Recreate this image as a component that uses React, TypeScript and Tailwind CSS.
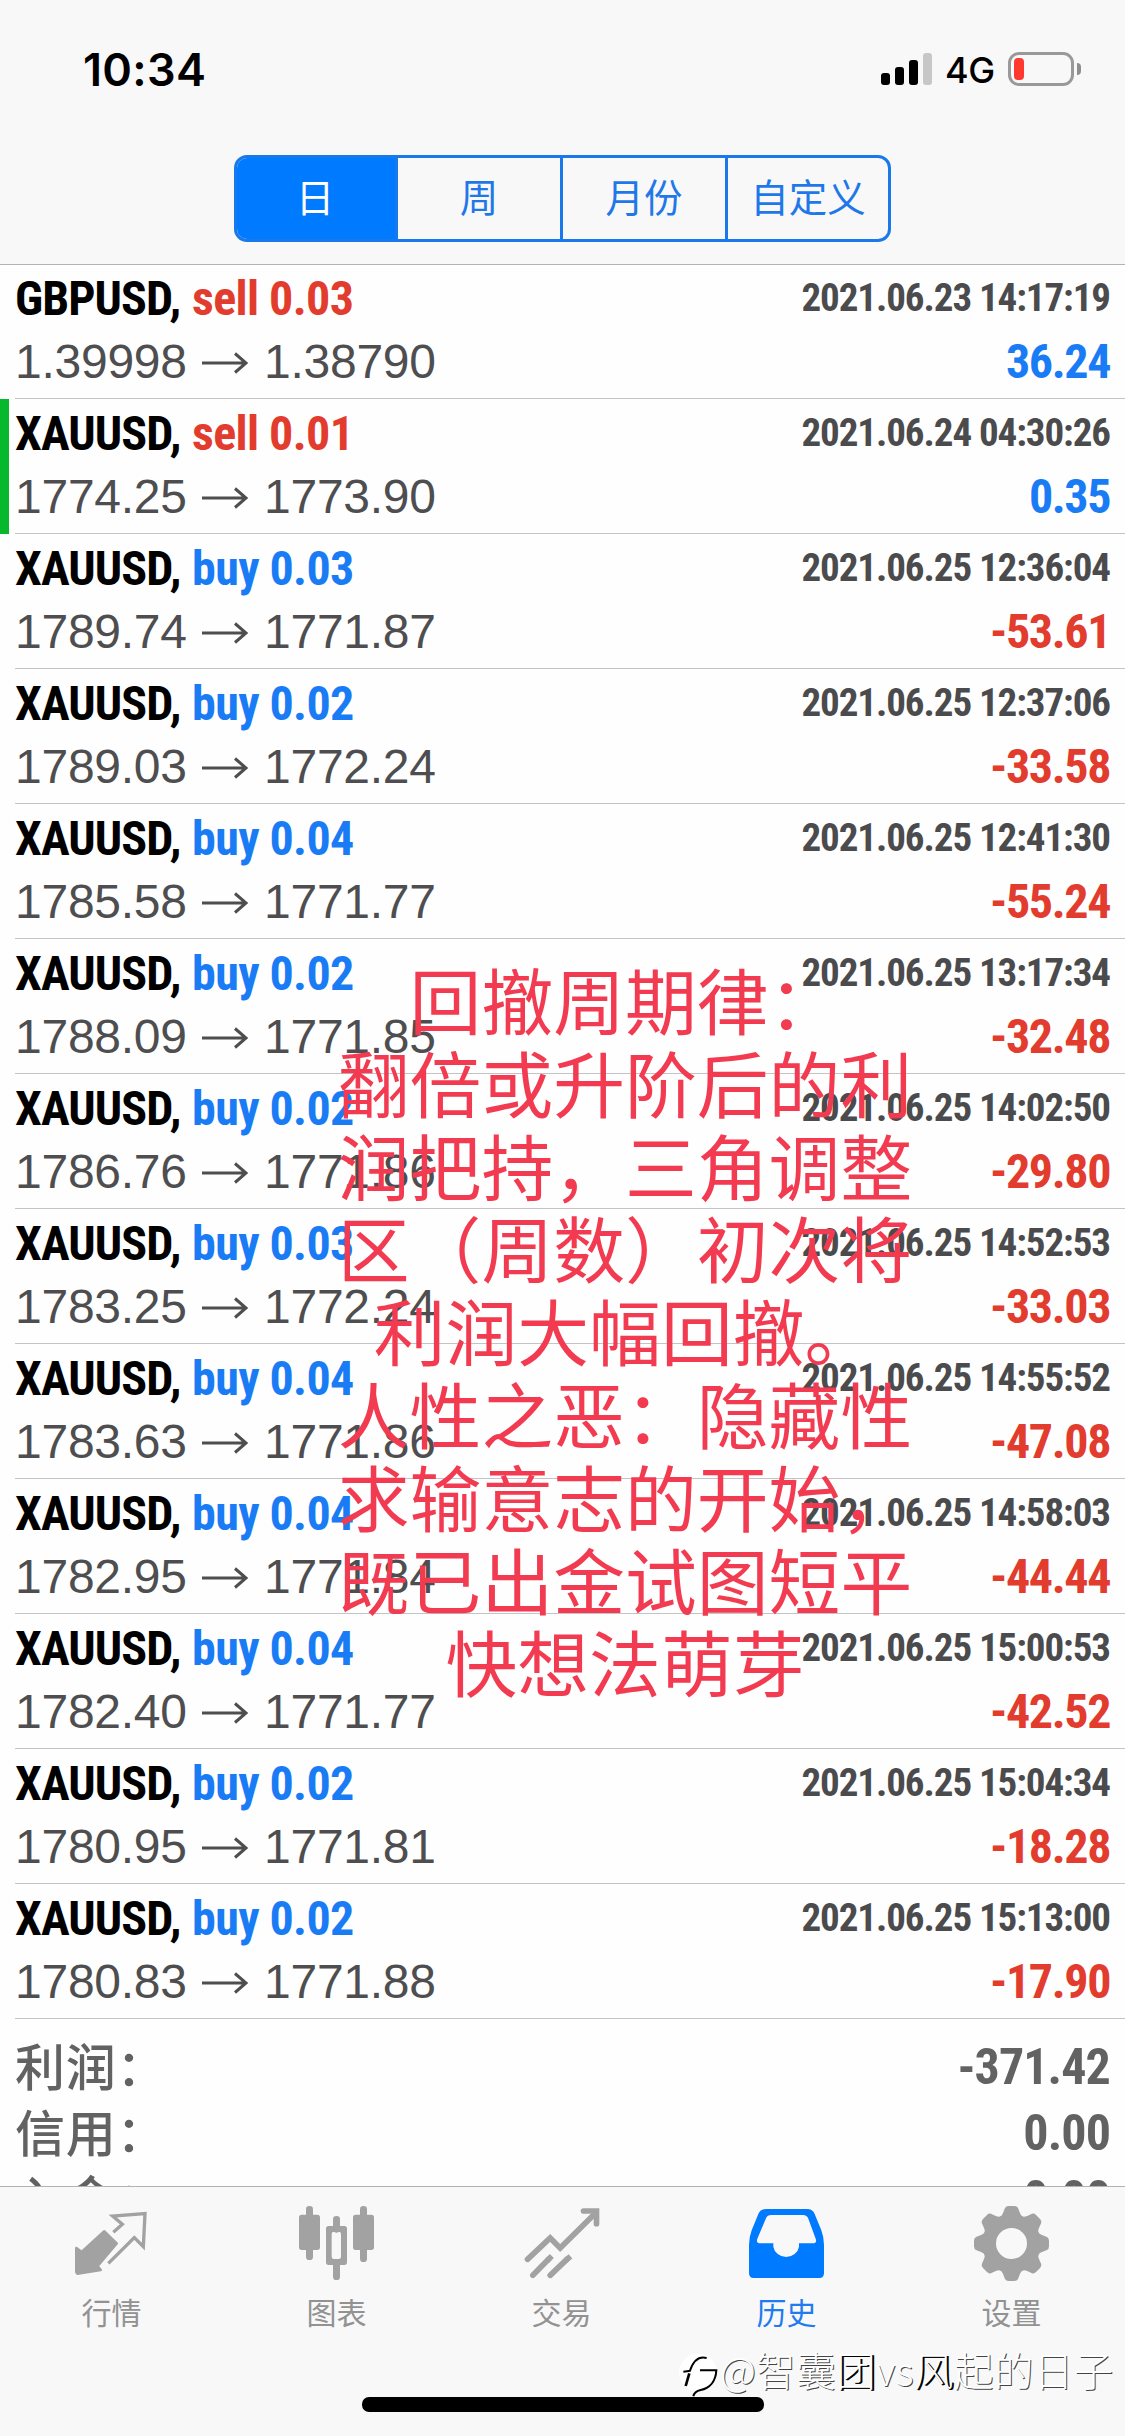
import type { ReactNode } from "react";

type Deal = {
  symbol: string;
  side: "buy" | "sell";
  volume: string;
  open: string;
  close: string;
  time: string;
  profit: string;
  marked?: boolean;
};

const deals: Deal[] = [
  { symbol: "GBPUSD", side: "sell", volume: "0.03", open: "1.39998", close: "1.38790", time: "2021.06.23 14:17:19", profit: "36.24" },
  { symbol: "XAUUSD", side: "sell", volume: "0.01", open: "1774.25", close: "1773.90", time: "2021.06.24 04:30:26", profit: "0.35", marked: true },
  { symbol: "XAUUSD", side: "buy", volume: "0.03", open: "1789.74", close: "1771.87", time: "2021.06.25 12:36:04", profit: "-53.61" },
  { symbol: "XAUUSD", side: "buy", volume: "0.02", open: "1789.03", close: "1772.24", time: "2021.06.25 12:37:06", profit: "-33.58" },
  { symbol: "XAUUSD", side: "buy", volume: "0.04", open: "1785.58", close: "1771.77", time: "2021.06.25 12:41:30", profit: "-55.24" },
  { symbol: "XAUUSD", side: "buy", volume: "0.02", open: "1788.09", close: "1771.85", time: "2021.06.25 13:17:34", profit: "-32.48" },
  { symbol: "XAUUSD", side: "buy", volume: "0.02", open: "1786.76", close: "1771.86", time: "2021.06.25 14:02:50", profit: "-29.80" },
  { symbol: "XAUUSD", side: "buy", volume: "0.03", open: "1783.25", close: "1772.24", time: "2021.06.25 14:52:53", profit: "-33.03" },
  { symbol: "XAUUSD", side: "buy", volume: "0.04", open: "1783.63", close: "1771.86", time: "2021.06.25 14:55:52", profit: "-47.08" },
  { symbol: "XAUUSD", side: "buy", volume: "0.04", open: "1782.95", close: "1771.84", time: "2021.06.25 14:58:03", profit: "-44.44" },
  { symbol: "XAUUSD", side: "buy", volume: "0.04", open: "1782.40", close: "1771.77", time: "2021.06.25 15:00:53", profit: "-42.52" },
  { symbol: "XAUUSD", side: "buy", volume: "0.02", open: "1780.95", close: "1771.81", time: "2021.06.25 15:04:34", profit: "-18.28" },
  { symbol: "XAUUSD", side: "buy", volume: "0.02", open: "1780.83", close: "1771.88", time: "2021.06.25 15:13:00", profit: "-17.90" },
];

const noteLines = [
  "回撤周期律：",
  "翻倍或升阶后的利",
  "润把持，三角调整",
  "区（周数）初次将",
  "利润大幅回撤。",
  "人性之恶：隐藏性",
  "求输意志的开始，",
  "既已出金试图短平",
  "快想法萌芽",
];

const summary = [
  ["利润：", "-371.42"],
  ["信用：", "0.00"],
  ["入金：", "0.00"],
];

function StatusBar() {
  return (
    <div className="flex h-[140px] items-start justify-between pl-[83px] pr-[44px]">
      <div className="mt-[42px] font-['Inter'] text-[45px] font-semibold leading-[56px] tracking-[0.3px] text-black">10:34</div>
      <div className="flex items-start">
        <div className="mt-[53px] flex h-[32px] items-end gap-[5px]">
          <i className="h-[12px] w-[9px] rounded-[3px] bg-black" />
          <i className="h-[18px] w-[9px] rounded-[3px] bg-black" />
          <i className="h-[25px] w-[9px] rounded-[3px] bg-black" />
          <i className="h-[32px] w-[9px] rounded-[3px] bg-[#c7c7c7]" />
        </div>
        <div className="ml-[13px] mt-[48px] w-[50px] font-['Inter'] text-[36px] font-medium leading-[44px] tracking-[-0.5px] text-black">4G</div>
        <div className="ml-[13px] mt-[52px] flex items-center gap-[3px]">
          <div className="h-[34px] w-[66px] rounded-[11px] border-[3px] border-[#999] p-[3px]">
            <div className="h-[22px] w-[10px] rounded-[4px] bg-[#ff3830]" />
          </div>
          <div className="h-[12px] w-[4px] rounded-r-[4px] bg-[#8e8e8e]" />
        </div>
      </div>
    </div>
  );
}

function Segments() {
  const items = ["日", "周", "月份", "自定义"];
  return (
    <div className="mt-[15px] grid h-[87px] w-[657px] grid-cols-[161px_165px_165px_1fr] divide-x-[3px] divide-[#1a79ea] overflow-hidden rounded-[13px] border-[3px] border-[#1a79ea] text-[38.5px] text-[#1f78ea]">
      {items.map((t, i) => (
        <div key={t} className={i === 0 ? "flex items-center justify-center bg-[#007aff] pb-[6px] pr-[2px] text-white" : "flex items-center justify-center pb-[6px]"}>
          {t}
        </div>
      ))}
    </div>
  );
}

function DealRow({ deal }: { deal: Deal }) {
  const tone = deal.side === "buy" ? "text-[#1a7cf5]" : "text-[#e23c2e]";
  const profitTone = deal.profit.startsWith("-") ? "text-[#e23c2e]" : "text-[#1a7cf5]";
  return (
    <div className="flex h-[135px]">
      <div className={deal.marked ? "w-[9px] bg-[#06b92c]" : "w-[9px]"} />
      <div className="ml-[6px] flex-1 border-b border-[#c4c4c6] pr-[15px] pt-[3px]">
        <div className="flex h-[63px] justify-between font-['Roboto'] font-bold [font-stretch:75%]">
          <div className="flex whitespace-pre text-[48px] leading-[63px]">
            <span className="w-[177px] tracking-[-0.9px] text-black">{deal.symbol},</span>
            <span className={`${tone} tracking-[-0.6px]`}>
              {deal.side} {deal.volume}
            </span>
          </div>
          <div className="text-[39px] leading-[63px] tracking-[-1.07px] text-[#4b4b4d]">{deal.time}</div>
        </div>
        <div className="flex h-[63px] justify-between text-[48px] leading-[63px]">
          <div className="flex items-center font-['Liberation_Sans'] tracking-[-0.25px] text-[#4e4e50]">
            <span className="w-[187px]">{deal.open}</span>
            <svg width="46" height="22" viewBox="0 0 46 22" fill="none" stroke="currentColor" strokeWidth="3" className="mt-[3px]">
              <path d="M0 11H44M33 1.5L44 11L33 20.5" />
            </svg>
            <span className="ml-[16px]">{deal.close}</span>
          </div>
          <div className={`${profitTone} font-['Roboto'] font-bold tracking-[-1.4px] [font-stretch:75%]`}>{deal.profit}</div>
        </div>
      </div>
    </div>
  );
}

function QuotesIcon() {
  return (
    <svg width="75" height="75" viewBox="225 108 225 225" className="overflow-visible" fill="none">
      <path fill="currentColor" stroke="currentColor" strokeWidth="8" strokeLinejoin="round" d="M313 184L350 220L293 288L302 300L232 311L229 306V234L245 246Z" />
      <path stroke="currentColor" strokeWidth="10" d="M340 187L367 163L338 138L435 131L430 230L403 203L325 280" />
    </svg>
  );
}

function ChartsIcon() {
  return (
    <svg width="75" height="75" viewBox="900 108 225 225" className="overflow-visible" fill="currentColor">
      <rect x="918" y="108" width="21" height="162" rx="10" />
      <rect x="897" y="134" width="63" height="106" rx="8" />
      <rect x="999" y="138" width="21" height="50" rx="10" />
      <rect x="999" y="270" width="21" height="60" rx="10" />
      <path fillRule="evenodd" d="M986 168H1033a8 8 0 0 1 8 8V277a8 8 0 0 1-8 8H986a8 8 0 0 1-8-8V176a8 8 0 0 1 8-8ZM1002 185a7 7 0 0 0-7 7V260a7 7 0 0 0 7 7H1016a7 7 0 0 0 7-7V192a7 7 0 0 0-7-7Z" />
      <rect x="1080" y="108" width="21" height="168" rx="10" />
      <rect x="1059" y="134" width="63" height="106" rx="8" />
    </svg>
  );
}

function TradeIcon() {
  return (
    <svg width="75" height="75" viewBox="43.5 48 225 225" className="overflow-visible" fill="none" stroke="currentColor" strokeWidth="17" strokeLinecap="round">
      <path d="M51 208L119 144L149 174L256 68" strokeLinejoin="miter" />
      <path d="M219 63H258V101" />
      <path d="M67 256L114 208M119 256L169 208" />
      <path d="M110 212L124 198M165 212L180 199" strokeLinecap="butt" />
    </svg>
  );
}

function HistoryIcon() {
  return (
    <svg width="75" height="75" viewBox="720 48 225 225" className="overflow-visible" fill="currentColor">
      <path
        fillRule="evenodd"
        d="M769 57H891Q908 57 914 72L934 121Q942 142 942 165V249Q942 264 928 264H731Q717 264 717 249V165Q717 142 725 121L745 72Q751 57 769 57ZM784 75Q772 75 768 85L742 146Q737 160 752 160H790V170A39 37 0 0 0 867 170V160H907Q922 160 917 146L895 86Q891 75 879 75Z"
      />
    </svg>
  );
}

function SettingsIcon() {
  const angles = [0, 45, 90, 135, 180, 225, 270, 315];
  return (
    <svg width="75" height="75" viewBox="45 48 225 225" className="overflow-visible" fill="currentColor">
      <circle cx="154.5" cy="160.5" r="67" fill="none" stroke="currentColor" strokeWidth="41" />
      {angles.map((a) => (
        <path key={a} transform={`rotate(${a} 154.5 160.5)`} d="M117 82Q126 79 130 67L135 54Q138 48 146 48H163Q171 48 174 54L179 67Q183 79 192 82L180 100H129Z" />
      ))}
    </svg>
  );
}

function Tab({ label, active, children }: { label: string; active?: boolean; children: ReactNode }) {
  return (
    <div className={active ? "flex flex-col items-center text-[#007aff]" : "flex flex-col items-center text-[#a2a2a2]"}>
      {children}
      <span className={active ? "mt-[12px] pr-[2px] text-[30px] leading-[36px] text-[#1f7cf0]" : "mt-[12px] pr-[2px] text-[30px] leading-[36px] text-[#929292]"}>{label}</span>
    </div>
  );
}

export default function App() {
  return (
    <div className="relative flex h-[2436px] w-[1125px] flex-col overflow-hidden bg-[#fefefe] font-['Inter','Noto_Sans_CJK_SC',sans-serif]">
      <header className="z-10 flex h-[265px] shrink-0 flex-col items-center border-b border-[#b2b2b2] bg-[#f8f8f8] font-['Noto_Sans_CJK_SC',sans-serif]">
        <div className="w-full">
          <StatusBar />
        </div>
        <Segments />
      </header>

      <main className="-mt-px min-h-0 flex-1 overflow-hidden">
        {deals.map((d) => (
          <DealRow key={d.time} deal={d} />
        ))}
        <div className="flex flex-col pl-[15px] pr-[15px] pt-[15px] text-[#626262]">
          {summary.map(([label, value]) => (
            <div key={label} className="flex h-[66px] justify-between">
              <span className="-mt-[3px] font-['Noto_Sans_CJK_SC',sans-serif] text-[50px] font-medium leading-[66px] tracking-[0.8px]">{label}</span>
              <span className="font-['Roboto'] text-[50px] font-bold leading-[66px] tracking-[-0.9px] [font-stretch:75%]">{value}</span>
            </div>
          ))}
        </div>
      </main>

      <footer className="flex h-[250px] shrink-0 flex-col items-center border-t border-[#b2b2b2] bg-[#f8f8f8] font-['Noto_Sans_CJK_SC',sans-serif]">
        <nav className="grid h-[210px] w-full grid-cols-5 pt-[19px]">
          <Tab label="行情"><QuotesIcon /></Tab>
          <Tab label="图表"><ChartsIcon /></Tab>
          <Tab label="交易"><TradeIcon /></Tab>
          <Tab label="历史" active><HistoryIcon /></Tab>
          <Tab label="设置"><SettingsIcon /></Tab>
        </nav>
        <div className="h-[15px] w-[402px] rounded-[7px] bg-black" />
      </footer>

      <div className="absolute left-[325px] top-[957px] z-20 w-[600px] text-center font-['Noto_Sans_CJK_SC',sans-serif] text-[71.8px] leading-[82.8px] text-[#f23b50]">
        {noteLines.map((l) => (
          <div key={l} className="whitespace-nowrap">{l}</div>
        ))}
      </div>

      <div className="absolute left-[678px] top-[2350px] z-20 flex items-center">
        <svg width="42" height="50" viewBox="24 30 126 150" fill="none" stroke="#000" strokeWidth="6">
          <circle cx="84" cy="98" r="57" fill="#fff" stroke="none" />
          <path d="M40 95L62 92M60 92C70 62 88 48 110 54" />
          <path d="M90 91H139C137 125 118 145 92 150C78 153 72 160 70 169" />
          <path d="M58 100L47 138" strokeWidth="8" />
        </svg>
        <span className="-mt-[12px] whitespace-nowrap font-['Noto_Sans_CJK_SC',sans-serif] text-[39.4px] font-light leading-[46px] tracking-[0.5px] text-white [text-shadow:1px_1px_0_#444]">
          @智囊<b className="font-light [text-shadow:1px_1px_0_#000,2px_1px_0_#000]">团</b>vs<b className="font-light [text-shadow:1px_1px_0_#000,2px_1px_0_#000]">风</b>起的日子
        </span>
      </div>
    </div>
  );
}
